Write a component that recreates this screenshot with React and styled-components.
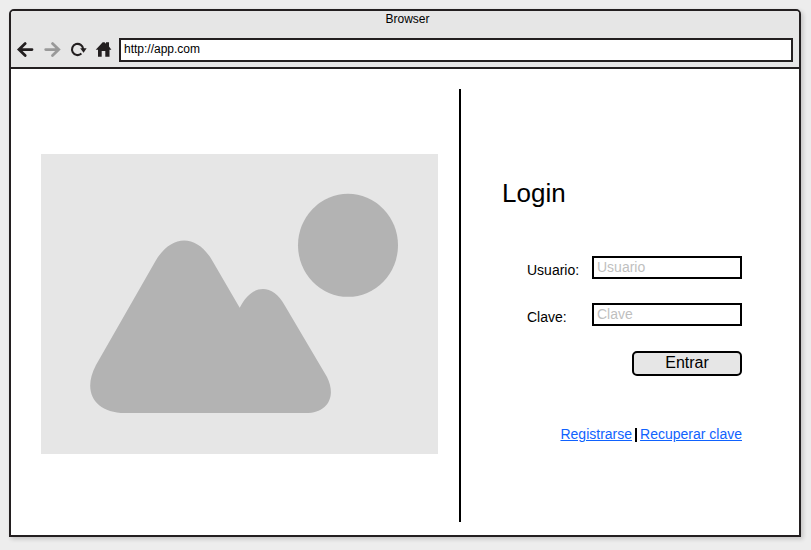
import React from "react";
import styled, { createGlobalStyle } from "styled-components";

const INK = "#231f20";

const GlobalStyle = createGlobalStyle`
  * { box-sizing: border-box; }
  html, body { margin: 0; background: #ededed; }
  body { font-family: "Liberation Sans", Arial, sans-serif; color: #000; }
`;

const Page = styled.div`
  width: 811px;
  height: 550px;
  padding: 9px 10px 13px 9px;
  overflow: hidden;
`;

const Window = styled.main`
  display: flex;
  flex-direction: column;
  width: 792px;
  height: 528px;
  border: 2px solid ${INK};
  border-radius: 5px 5px 0 0;
  background: #fff;
  box-shadow: 2px 2px 4px rgba(35, 31, 32, 0.2);
`;

const Chrome = styled.header`
  flex: none;
  height: 58px;
  background: #e6e6e6;
  border-bottom: 2px solid ${INK};
  border-radius: 3px 3px 0 0;
`;

const TitleBar = styled.div`
  height: 27px;
  padding: 1px 0 0 5px;
  font-size: 12px;
  line-height: 14px;
  text-align: center;
`;

const Toolbar = styled.div`
  display: flex;
  padding-right: 6px;
`;

const NavIcons = styled.nav`
  flex: none;
  width: 108px;
  height: 24px;
`;

const Address = styled.div`
  flex: 1;
  height: 24px;
  padding: 2px 3px;
  border: 2px solid ${INK};
  background: #fff;
  font-size: 12px;
  line-height: 14px;
`;

const Content = styled.div`
  display: flex;
  flex: 1;
  padding: 20px 57px 13px 30px;
`;

const Picture = styled.svg`
  flex: none;
  width: 397px;
  height: 300px;
  margin-top: 65px;
`;

const Divider = styled.div`
  flex: none;
  width: 2px;
  height: 433px;
  margin-left: 21px;
  background: #000;
`;

const LoginPanel = styled.form`
  flex: 1;
  display: flex;
  flex-direction: column;
  padding: 89px 0 0 41px;
`;

const Heading = styled.h1`
  margin: 0 0 48px;
  font-size: 26px;
  line-height: 30px;
  font-weight: 400;
`;

const Field = styled.label`
  display: flex;
  height: 23px;
  margin: 0 0 24px 25px;
  font-size: 14px;
`;

const FieldName = styled.span`
  width: 65px;
  padding-top: 6px;
  line-height: 16px;
`;

const Input = styled.input`
  width: 150px;
  height: 23px;
  margin: 0;
  padding: 0 3px 1px;
  border: 2px solid #000;
  border-radius: 0;
  outline: none;
  background: #fff;
  font: 14px "Liberation Sans", Arial, sans-serif;
  &::placeholder { color: #bfbfbf; opacity: 1; }
`;

const Submit = styled.button`
  align-self: flex-end;
  width: 110px;
  height: 25px;
  margin: 1px 0 0;
  padding: 0 0 2px;
  border: 2px solid #000;
  border-radius: 5px;
  background: #e6e6e6;
  color: #000;
  font: 16px/18px "Liberation Sans", Arial, sans-serif;
`;

const Links = styled.div`
  display: flex;
  align-self: flex-end;
  margin: 50px 0 0;
  font-size: 14px;
  line-height: 16px;
`;

const TextLink = styled.a`
  color: #0f62fe;
  text-decoration: underline;
`;

const Separator = styled.span`
  width: 2px;
  height: 14px;
  margin: 2px 3px 0;
  background: #000;
`;

function Navigation() {
  return (
    <NavIcons aria-label="Navigation">
      <svg width="108" height="24" viewBox="11 38 108 24" fill="none">
        <path d="M32 49.6H19.5M25.2 43.6L19 49.6L25.2 55.6" stroke={INK} strokeWidth="2.8" strokeLinecap="round" />
        <path d="M45.7 49.6H58.2M52.5 43.6L58.7 49.6L52.500 55.6" stroke="#999" strokeWidth="2.8" strokeLinecap="round" />
        <path d="M81.4 53.6A5.6 5.6 0 1 1 83.200 49.1" stroke={INK} strokeWidth="2.1" />
        <path d="M80.2 48.3H86.600L83.600 52.8Z" fill={INK} />
        <path d="M95.700 49.700L102.700 42.200H104.500L106 43.700V42.200H109V46.600L111.400 49.700H109.500V56.800H105.300V51H101.700V56.800H98V49.700Z" fill={INK} />
      </svg>
    </NavIcons>
  );
}

export default function App() {
  return (
    <Page>
      <GlobalStyle />
      <Window>
        <Chrome>
          <TitleBar>Browser</TitleBar>
          <Toolbar>
            <Navigation />
            <Address>http://app.com</Address>
          </Toolbar>
        </Chrome>
        <Content>
          <Picture viewBox="41 154 397 300" aria-label="Landscape">
            <path fill="#e6e6e6" d="M41 154H438V454H41Z" />
            <ellipse cx="348" cy="245.3" rx="50" ry="51.5" fill="#b3b3b3" />
            <path fill="#b3b3b3" d="M96 365L155.500 261C171.500 233.500 197 233.500 212.500 261L239.700 307.800C251.500 283.500 272.500 283 284.500 305L327 377C337 397 327 413 306 413H125C94 413 82 391 96 365Z" />
          </Picture>
          <Divider />
          <LoginPanel>
            <Heading>Login</Heading>
            <Field>
              <FieldName>Usuario:</FieldName>
              <Input placeholder="Usuario" />
            </Field>
            <Field>
              <FieldName>Clave:</FieldName>
              <Input type="password" placeholder="Clave" />
            </Field>
            <Submit type="button">Entrar</Submit>
            <Links>
              <TextLink href="#registrarse">Registrarse</TextLink>
              <Separator />
              <TextLink href="#recuperar">Recuperar clave</TextLink>
            </Links>
          </LoginPanel>
        </Content>
      </Window>
    </Page>
  );
}
